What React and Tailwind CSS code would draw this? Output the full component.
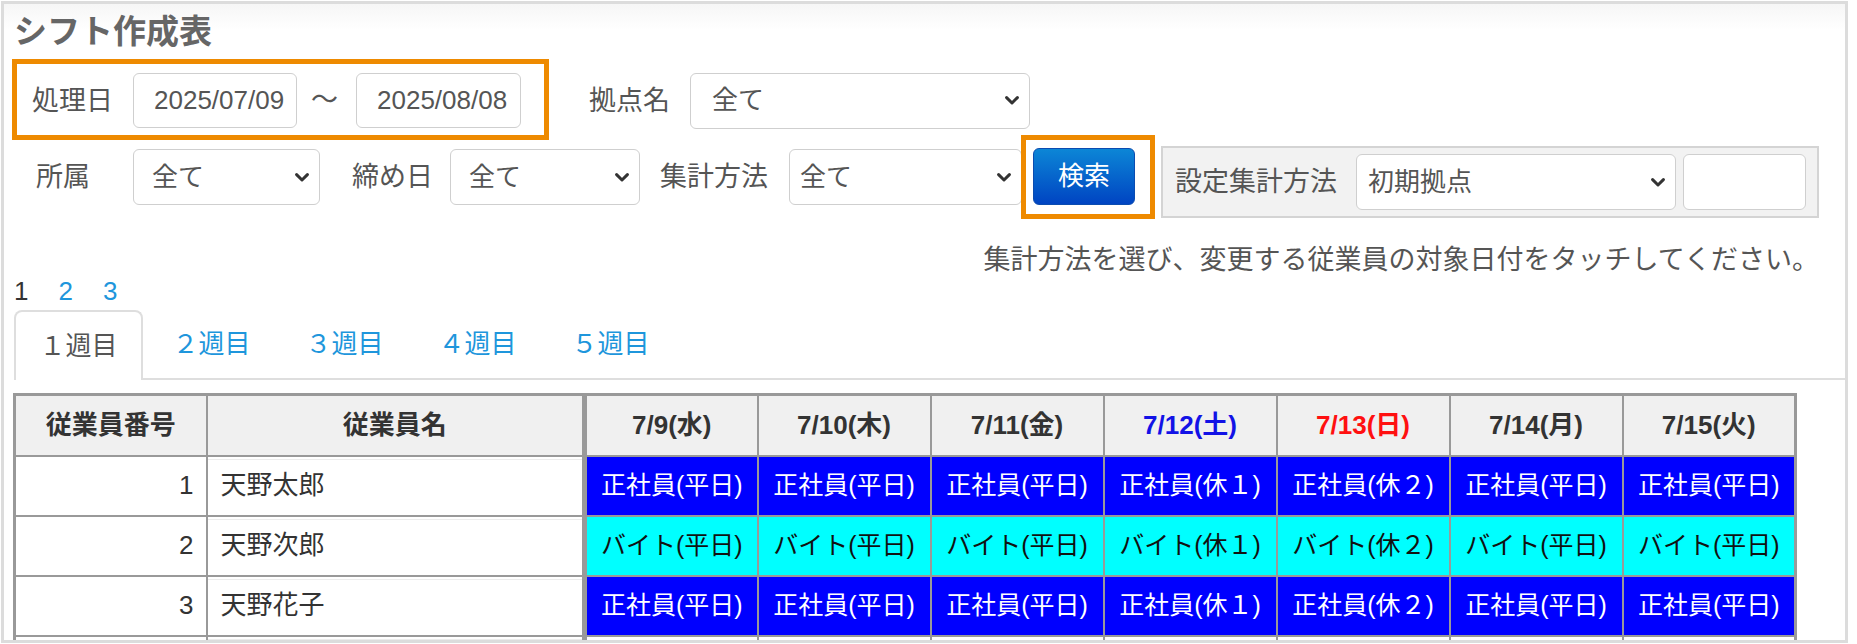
import React from 'react'

const days = [
  { label: '7/9(水)', tone: 'text-[#333]', kind: '平日' },
  { label: '7/10(木)', tone: 'text-[#333]', kind: '平日' },
  { label: '7/11(金)', tone: 'text-[#333]', kind: '平日' },
  { label: '7/12(土)', tone: 'text-[#1212e6]', kind: '休１' },
  { label: '7/13(日)', tone: 'text-[#ff1010]', kind: '休２' },
  { label: '7/14(月)', tone: 'text-[#333]', kind: '平日' },
  { label: '7/15(火)', tone: 'text-[#333]', kind: '平日' },
]

// 4行目は枠の下端で切れているので中身は空
const employees = [
  { no: 1, name: '天野太郎', type: '正社員' },
  { no: 2, name: '天野次郎', type: 'バイト' },
  { no: 3, name: '天野花子', type: '正社員' },
  { no: 4, name: '', type: '' },
]

const weeks = ['１週目', '２週目', '３週目', '４週目', '５週目']

function Chevron() {
  return (
    <svg width="14" height="9" viewBox="0 0 14 9" className="shrink-0">
      <path d="M1.6 1.6 L7 7 L12.4 1.6" fill="none" stroke="#333" strokeWidth="3" strokeLinecap="round" strokeLinejoin="round" />
    </svg>
  )
}

function Select({ value, className }) {
  return (
    <div className={`flex items-center justify-between h-[56px] bg-white border border-[#cfcfcf] rounded-[6px] pr-[10px] text-[26px] text-[#555] ${className}`}>
      <span>{value}</span>
      <Chevron />
    </div>
  )
}

function DateBox({ value, className }) {
  return (
    <div className={`flex items-center h-[55px] w-[164px] bg-white border border-[#cfcfcf] rounded-[6px] pl-[20px] text-[26px] text-[#555] ${className}`}>
      {value}
    </div>
  )
}

function Label({ children, className = '' }) {
  return <span className={`text-[27px] text-[#555] leading-[56px] whitespace-nowrap ${className}`}>{children}</span>
}

export default function App() {
  return (
    <div className="w-[1857px] h-[644px] bg-white pt-px pl-px">
      <div className="relative w-[1847px] h-[642px] border-[3px] border-[#dcdcdc] overflow-hidden bg-[linear-gradient(#f6f6f6,#fff_26px)] font-['Liberation_Sans','Noto_Sans_CJK_JP',sans-serif]">
        <h1 className="mt-[8px] ml-[10px] text-[33px] leading-[40px] font-bold text-[#666]">シフト作成表</h1>

        {/* 1行目 */}
        <div className="mt-[21px] flex items-center h-[55px] pl-[28px]">
          <Label>処理日</Label>
          <DateBox value="2025/07/09" className="ml-[20px]" />
          <span className="ml-[14px] text-[27px] text-[#555]">～</span>
          <DateBox value="2025/08/08" className="ml-[18px] w-[165px]" />
          <Label className="ml-[68px]">拠点名</Label>
          <Select value="全て" className="ml-[20px] w-[340px] pl-[21px]" />
        </div>

        {/* 2行目 */}
        <div className="mt-[18px] flex items-start h-[72px] pl-[32px]">
          <Label className="mt-[3px]">所属</Label>
          <Select value="全て" className="ml-[43px] mt-[3px] w-[187px] pl-[18px]" />
          <Label className="ml-[32px] mt-[3px]">締め日</Label>
          <Select value="全て" className="ml-[17px] mt-[3px] w-[190px] pl-[18px]" />
          <Label className="ml-[20px] mt-[3px]">集計方法</Label>
          <Select value="全て" className="ml-[21px] mt-[3px] w-[233px] pl-[10px]" />
          <button className="ml-[11px] mt-[2px] w-[102px] h-[57px] rounded-[6px] border border-[#0b4cb0] bg-[linear-gradient(#0c86d6,#0044c2)] text-white text-[26px]">
            検索
          </button>
          <div className="ml-[26px] w-[658px] h-[72px] flex items-center pl-[12px] bg-[#f2f2f2] border-2 border-[#d4d4d4]">
            <Label>設定集計方法</Label>
            <Select value="初期拠点" className="ml-[19px] w-[320px] pl-[11px]" />
            <div className="ml-[7px] w-[123px] h-[56px] bg-white border border-[#cfcfcf] rounded-[6px]" />
          </div>
        </div>

        <p className="mt-[27px] pr-[26px] text-right text-[27px] leading-[30px] text-[#555]">
          集計方法を選び、変更する従業員の対象日付をタッチしてください。
        </p>

        <div className="mt-px pl-[10px] flex gap-[30px] text-[26px] leading-[30px]">
          <span className="text-[#333]">1</span>
          <span className="text-[#1e96dc]">2</span>
          <span className="text-[#1e96dc]">3</span>
        </div>

        {/* 週タブ */}
        <div className="mt-[4px] ml-[10px] flex h-[70px] border-b-2 border-[#dedede]">
          {weeks.map((w, i) => (
            <div
              key={w}
              className={`w-[129px] mr-[4px] flex items-center justify-center text-[26px] ${
                i === 0
                  ? 'border-2 border-b-0 border-[#dedede] rounded-t-[8px] bg-white -mb-[2px] text-[#555]'
                  : 'text-[#1e96dc]'
              }`}
            >
              {w}
            </div>
          ))}
        </div>

        {/* シフト表 */}
        <table className="mt-[13px] ml-[9px] w-[1781px] table-fixed border-collapse border-[3px] border-[#999]">
          <colgroup>
            <col className="w-[192px]" />
            <col className="w-[378px]" />
            {days.map((d) => (
              <col key={d.label} className="w-[173px]" />
            ))}
          </colgroup>
          <thead>
            <tr className="h-[61px] bg-[#f0f0f0] text-[26px] font-bold">
              <th className="border-2 border-[#999] text-[#333]">従業員番号</th>
              <th className="border-2 border-r-[5px] border-[#999] text-[#333]">従業員名</th>
              {days.map((d) => (
                <th key={d.label} className={`border-2 border-[#999] ${d.tone}`}>
                  {d.label}
                </th>
              ))}
            </tr>
          </thead>
          <tbody>
            {employees.map((e) => (
              <tr key={e.no} className="h-[60px] text-[26px]">
                <td className="border-2 border-[#999] text-right pr-[12px] text-[#333]">{e.name ? e.no : ''}</td>
                <td className="border-2 border-r-[5px] border-[#999] pl-[13px] text-[#333] shadow-[inset_0_2px_0_#fff,inset_0_3px_0_#ececec]">
                  {e.name}
                </td>
                {days.map((d) => {
                  const blue = e.type === '正社員'
                  const cyan = e.type === 'バイト'
                  return (
                    <td
                      key={d.label}
                      className={`border-2 border-[#999] text-center text-[25px] ${
                        blue ? 'bg-[#0000ff] text-white' : cyan ? 'bg-[#00ffff] text-[#111]' : 'bg-white'
                      }`}
                    >
                      {e.type ? `${e.type}(${d.kind})` : ''}
                    </td>
                  )
                })}
              </tr>
            ))}
          </tbody>
        </table>

        {/* 注記の枠 */}
        <div className="absolute left-[8px] top-[55px] w-[537px] h-[81px] border-[5px] border-[#ee8a00]" />
        <div className="absolute left-[1017px] top-[131px] w-[134px] h-[84px] border-[5px] border-[#ee8a00]" />
      </div>
    </div>
  )
}
